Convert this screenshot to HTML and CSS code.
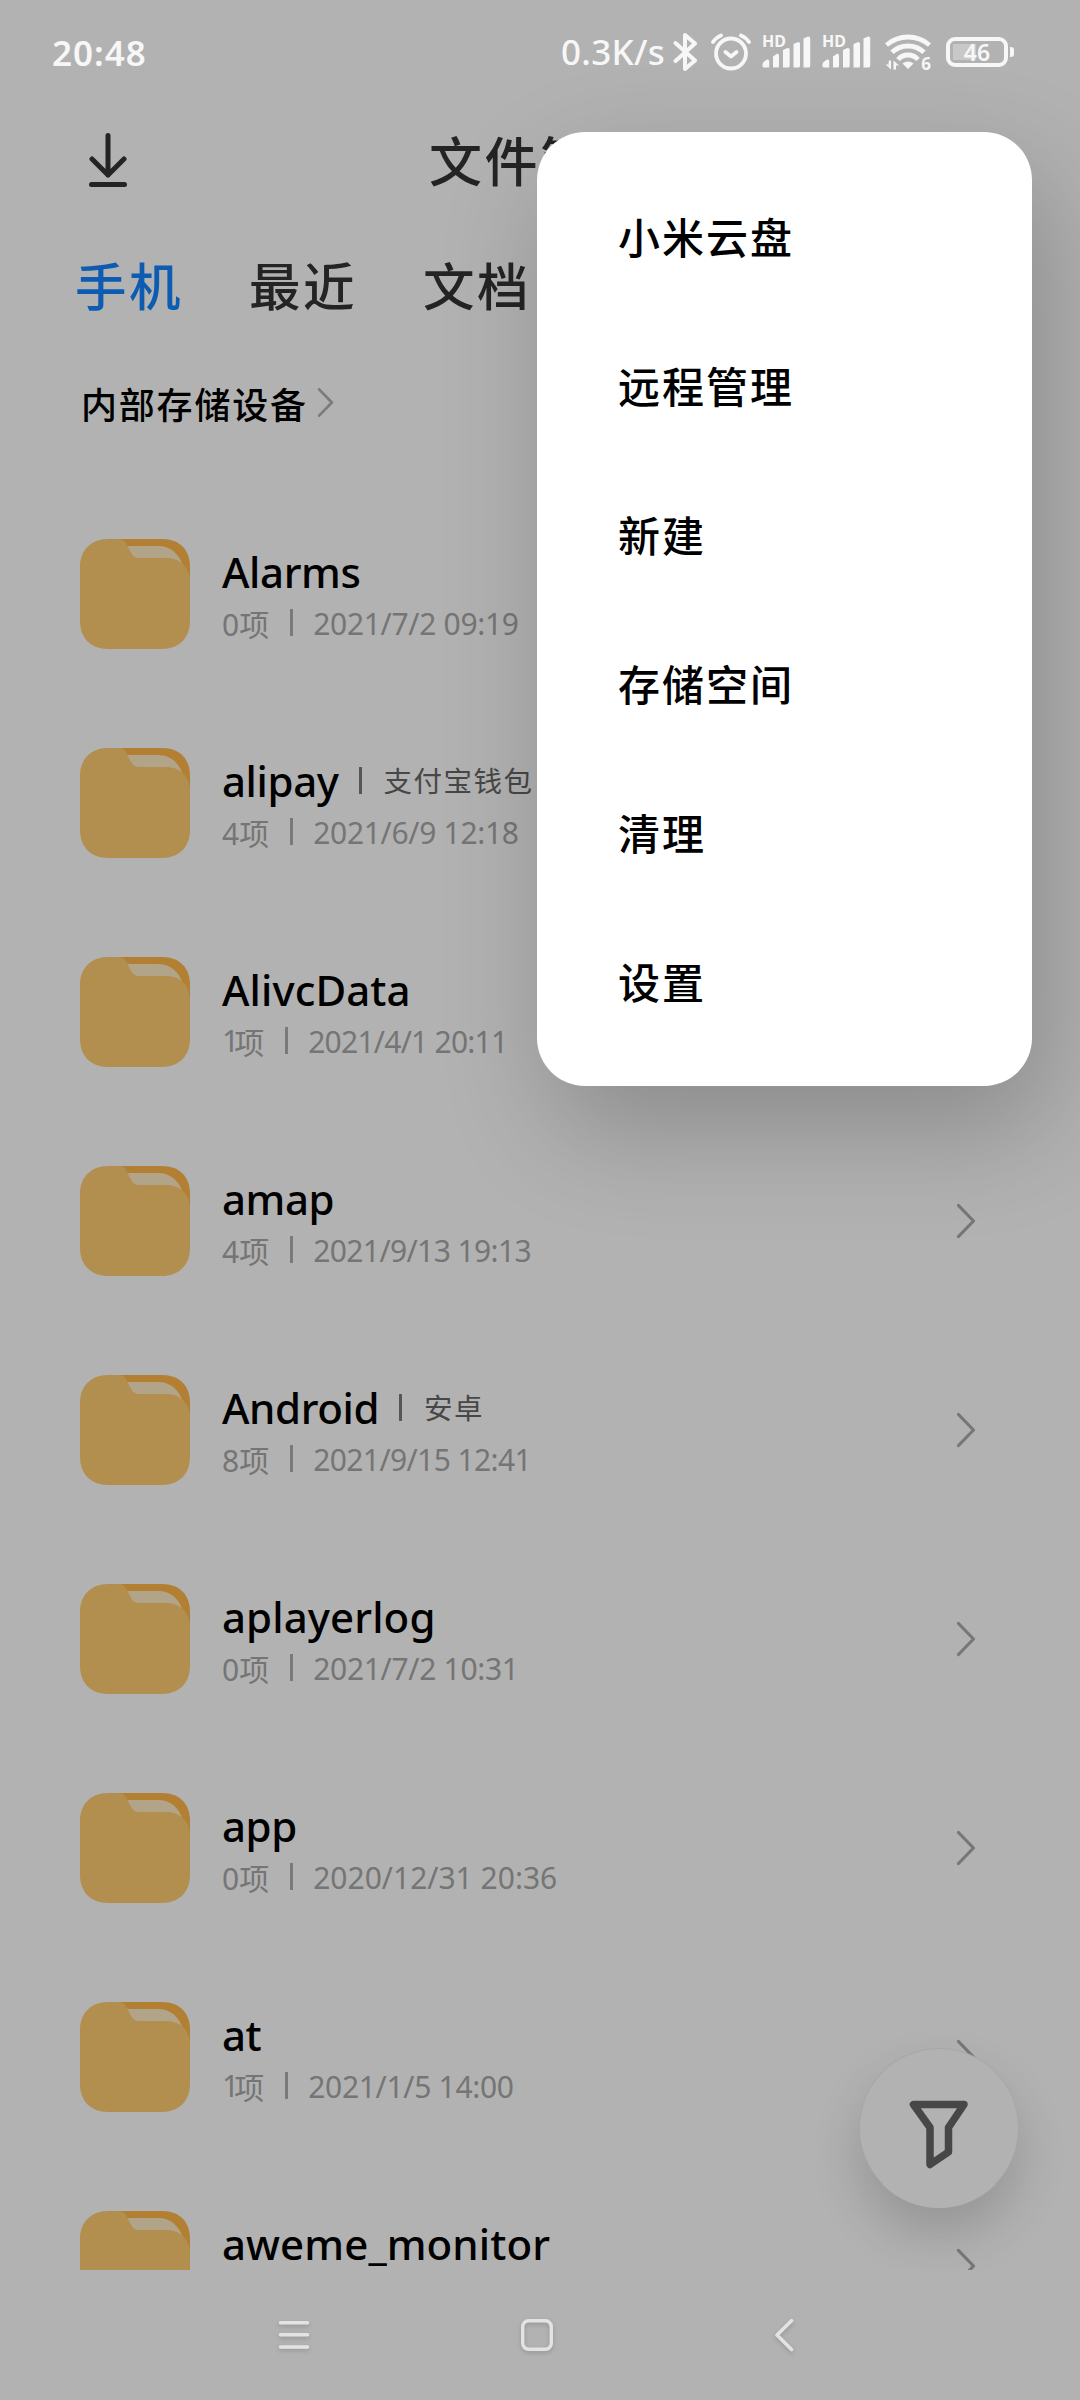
FILE: index.html
```html
<!DOCTYPE html>
<html lang="zh-CN">
<head>
<meta charset="utf-8">
<title>文件管理</title>
<link rel="stylesheet" href="styles.css">
</head>
<body>
<svg class="defs" aria-hidden="true">
  <symbol id="folder" viewBox="0 0 110 110">
    <path fill="#b27f33" d="M28 0H82C100 0 110 11 110 28V60H28Z"/>
    <path fill="#b2a489" d="M44 7H78C91 7 99 15 103 27L90 40H50Z"/>
    <path fill="#b28f4f" d="M28 0H39C43 0 45 2 47 6L50 12C53 17 54 19 60 19H86C101 19 110 29 110 43V82C110 99 99 110 82 110H28C11 110 0 99 0 82V28C0 11 11 0 28 0Z"/>
  </symbol>
  <symbol id="chevron" viewBox="0 0 20 36">
    <path d="M2.5 2.5 17.5 18 2.5 33.5" fill="none" stroke="currentColor" stroke-width="3.2" stroke-linecap="round" stroke-linejoin="round"/>
  </symbol>
  <symbol id="signal" viewBox="0 0 50 32">
    <path fill="currentColor" d="M1.500 26 5 23.500Q7.200 23 7.200 25V31.500H2Q.5 31.500.5 30V28ZM11 31.500V20.500L15 17.800Q17 17.500 17 19.500V30Q17 31.500 15.500 31.500ZM21 31.500V14L25.500 12Q27.700 11.800 27.700 13.500V30Q27.700 31.500 26 31.500ZM31.500 31.500V8L36 6Q38 6 38 7.500V30Q38 31.500 36.500 31.500ZM41.500 31.500V2.500L46 .5Q48.200.5 48.200 2V30Q48.200 31.500 46.500 31.500Z"/>
  </symbol>
</svg>
<div class="screen">
  <header class="status">
    <span class="time">20:48</span>
    <div class="indicators">
      <span class="speed">0.3K/s</span>
      <svg class="bluetooth" viewBox="0 0 25 40"><path d="M2.500 11 22 28.500 12 37V3L22 11.500 2.500 29" fill="none" stroke="currentColor" stroke-width="4" stroke-linecap="round" stroke-linejoin="round"/></svg>
      <svg class="alarm" viewBox="0 0 40 38"><g fill="none" stroke="currentColor" stroke-width="3.800" stroke-linecap="round" stroke-linejoin="round"><circle cx="20" cy="20.500" r="15"/><path d="M14.500 19 20 23.500 25.500 19M2 9Q5 4.500 10 2.500M38 9Q35 4.500 30 2.500"/></g></svg>
      <span class="cell"><span class="hd">HD</span><svg class="bars"><use href="#signal"/></svg></span>
      <span class="cell"><span class="hd">HD</span><svg class="bars"><use href="#signal"/></svg></span>
      <span class="wifi"><svg viewBox="0 0 46 36"><g fill="none" stroke="currentColor" stroke-width="4.800"><path d="M1.500 11Q11 3 23 3T44.500 11M7 18.300Q13.500 12 23 12T39 18.300M13 25.500Q17 21 23 21T33 25.500"/></g><path fill="currentColor" d="M17.500 29.500Q23 25.500 28.500 29.500L23 35ZM6 26.500V35.500L.5 30.500H3V33L4 26.500ZM8.500 35.500V26.500L14 31.500H11V35.500Z"/></svg><span class="gen">6</span></span>
      <span class="battery"><span class="level">46</span></span>
    </div>
  </header>
  <div class="appbar">
    <svg class="download" viewBox="0 0 38 54"><path d="M19 2.500V42M3 26 19 42 35 26M2.500 51.500H35.500" fill="none" stroke="currentColor" stroke-width="5" stroke-linecap="round" stroke-linejoin="round"/></svg>
    <h1 class="title">文件管理</h1>
  </div>
  <nav class="tabs"><span class="tab active">手机</span><span class="tab">最近</span><span class="tab">文档</span></nav>
  <div class="crumb"><span>内部存储设备</span><svg class="crumb-arrow"><use href="#chevron"/></svg></div>
  <main class="list">
    <div class="row"><svg class="folder"><use href="#folder"/></svg><div class="info"><div class="name">Alarms</div><div class="meta">0项<i></i><span class="snug">2021/7/2 09:19</span></div></div><svg class="arrow"><use href="#chevron"/></svg></div>
    <div class="row"><svg class="folder"><use href="#folder"/></svg><div class="info"><div class="name">alipay<span class="alias"><i></i>支付宝钱包</span></div><div class="meta">4项<i></i><span class="snug">2021/6/9 12:18</span></div></div><svg class="arrow"><use href="#chevron"/></svg></div>
    <div class="row"><svg class="folder"><use href="#folder"/></svg><div class="info"><div class="name wide">AlivcData</div><div class="meta narrow"><b>1</b>项<i></i><span class="tightest">2021/4/1 20:11</span></div></div><svg class="arrow"><use href="#chevron"/></svg></div>
    <div class="row"><svg class="folder"><use href="#folder"/></svg><div class="info"><div class="name">amap</div><div class="meta">4项<i></i><span class="tight">2021/9/13 19:13</span></div></div><svg class="arrow"><use href="#chevron"/></svg></div>
    <div class="row"><svg class="folder"><use href="#folder"/></svg><div class="info"><div class="name">Android<span class="alias"><i></i>安卓</span></div><div class="meta">8项<i></i><span class="tight">2021/9/15 12:41</span></div></div><svg class="arrow"><use href="#chevron"/></svg></div>
    <div class="row"><svg class="folder"><use href="#folder"/></svg><div class="info"><div class="name wide">aplayerlog</div><div class="meta">0项<i></i><span class="snug">2021/7/2 10:31</span></div></div><svg class="arrow"><use href="#chevron"/></svg></div>
    <div class="row"><svg class="folder"><use href="#folder"/></svg><div class="info"><div class="name">app</div><div class="meta">0项<i></i><span>2020/12/31 20:36</span></div></div><svg class="arrow"><use href="#chevron"/></svg></div>
    <div class="row"><svg class="folder"><use href="#folder"/></svg><div class="info"><div class="name">at</div><div class="meta narrow"><b>1</b>项<i></i><span class="snug">2021/1/5 14:00</span></div></div><svg class="arrow"><use href="#chevron"/></svg></div>
    <div class="row"><svg class="folder"><use href="#folder"/></svg><div class="info"><div class="name wide">aweme_monitor</div></div><svg class="arrow"><use href="#chevron"/></svg></div>
    <div class="fab"><svg viewBox="0 0 60 69"><path d="M4.500 4.500H55L39.500 27.500V52L21 64.500V27.500Z" fill="none" stroke="currentColor" stroke-width="7.500" stroke-linejoin="round"/></svg></div>
  </main>
  <footer class="navbar">
    <svg viewBox="0 0 36 36"><path d="M4.500 5.700H31.500M4.500 17.700H31.500M4.500 30H31.500" stroke="currentColor" stroke-width="3.600" stroke-linecap="round"/></svg>
    <svg viewBox="0 0 36 36"><rect x="3.700" y="3.700" width="28.600" height="28.600" rx="6" fill="none" stroke="currentColor" stroke-width="3.400"/></svg>
    <svg viewBox="0 0 36 36"><path d="M25.500 3.700 11 18 25.500 32.500" fill="none" stroke="currentColor" stroke-width="3.600" stroke-linecap="round" stroke-linejoin="round"/></svg>
  </footer>
  <div class="menu">
    <div class="item">小米云盘</div>
    <div class="item">远程管理</div>
    <div class="item">新建</div>
    <div class="item">存储空间</div>
    <div class="item">清理</div>
    <div class="item">设置</div>
  </div>
</div>
</body>
</html>
```
FILE: styles.css
```css
* { box-sizing: border-box; }
body { margin: 0; background: #b2b2b2; }
svg { display: block; flex: none; }
.defs { position: absolute; width: 0; height: 0; }
.screen {
  position: relative;
  display: flex;
  flex-direction: column;
  width: 1080px;
  height: 2400px;
  overflow: hidden;
  background: #b2b2b2;
  color: #000;
  font-family: "Noto Sans", "Noto Sans CJK SC", sans-serif;
  font-weight: 500;
  white-space: nowrap;
}

/* Status bar */
.status { display: flex; justify-content: space-between; height: 104px; padding: 0 66px 0 52px; color: #f7f7f7; }
.time { font-size: 35px; line-height: 106px; font-weight: 600; letter-spacing: 1px; }
.indicators { display: flex; align-items: center; height: 104px; }
.speed { width: 112px; font-size: 35px; line-height: 106px; letter-spacing: .3px; }
.bluetooth { width: 25px; height: 40px; margin-right: 13px; }
.alarm { width: 40px; height: 38px; margin-right: 11px; }
.cell { position: relative; width: 50px; height: 32px; margin-right: 10px; }
.bars { width: 50px; height: 32px; }
.hd { position: absolute; left: 0; top: -5px; font-size: 16px; line-height: 20px; font-weight: 700; }
.wifi { position: relative; margin: 0 15px 0 3px; }
.wifi svg { width: 46px; height: 36px; }
.gen { position: absolute; right: 0; bottom: -4px; font-size: 17px; line-height: 20px; font-weight: 700; }
.battery { position: relative; width: 62px; height: 30px; margin-right: 6px; border: 4px solid; border-radius: 9px; background: linear-gradient(90deg, #c8c8c8, #c8c8c8) 3px 3px / 23px 16px no-repeat; }
.battery::after { content: ""; position: absolute; left: 60px; top: 6px; width: 4px; height: 10px; border-radius: 0 3px 3px 0; background: currentColor; }
.level { display: block; text-align: center; font-size: 23px; line-height: 22px; font-weight: 600; }

/* App bar */
.appbar { display: flex; align-items: center; height: 114px; padding-left: 89px; color: #242424; }
.download { width: 38px; height: 54px; margin-bottom: 2px; }
.title { margin: 2px 0 0 302px; font-size: 53px; letter-spacing: 2.500px; font-weight: 500; line-height: 78px; }
.tabs { display: flex; align-items: center; gap: 66px; height: 138px; padding: 0 0 8px 75px; color: #242424; font-size: 51.500px; letter-spacing: 2.500px; }
.active { color: #0d5cb2; }
.crumb { display: flex; align-items: center; height: 98px; padding: 0 0 4px 81px; font-size: 36px; letter-spacing: 1.800px; }
.crumb-arrow { width: 17px; height: 31px; margin: 0 0 1px 9px; color: #7c7c7c; }

/* File list */
.list { position: relative; height: 1781px; margin-top: 35px; overflow: hidden; }
.row { display: flex; align-items: center; height: 209px; padding: 0 104px 0 80px; }
.folder { width: 110px; height: 110px; }
.info { flex: 1; height: 110px; margin-left: 32px; }
.name { display: flex; align-items: center; height: 66px; font-size: 42px; line-height: 50px; letter-spacing: -.4px; }
.wide { letter-spacing: .1px; }
.alias { display: flex; align-items: center; font-size: 28.500px; letter-spacing: 1.500px; font-weight: 400; color: #474747; }
.alias i { width: 3px; height: 27px; margin: 0 22px 0 20px; background: #565656; }
.meta { display: flex; align-items: center; height: 36px; font-size: 30px; font-weight: 400; color: #757575; }
.meta span { margin: 2px 0 0 -1px; }
.meta i { width: 3px; height: 27px; margin: 0 21px; background: #7a7a7a; }
.narrow b { margin-right: -5px; font-weight: 400; }
.snug { letter-spacing: -.3px; }
.tight { letter-spacing: -.6px; }
.tightest { letter-spacing: -.75px; }
.arrow { width: 20px; height: 36px; color: #777; }
.fab { position: absolute; left: 859px; top: 1559px; display: flex; align-items: center; justify-content: center; width: 160px; height: 160px; border: 1px solid #a7a7a7; border-bottom-color: transparent; border-radius: 50%; background: #b2b2b2; background-clip: border-box; color: #474747; box-shadow: 0 26px 50px rgba(0,0,0,.16); }
.fab svg { width: 60px; height: 69px; margin-top: 12px; }

/* System navigation */
.navbar { display: flex; justify-content: space-between; padding: 47px 278px 0 276px; color: #e3e3e3; }
.navbar svg { width: 36px; height: 36px; filter: drop-shadow(0 2px 2px rgba(0,0,0,.16)); }
.navbar svg:nth-child(2) { margin-right: 5px; }

/* Popup menu */
.menu { position: absolute; left: 537px; top: 132px; width: 495px; height: 954px; padding: 31px 0 0 81px; border-radius: 48px; background: #fff; box-shadow: 15px 43px 110px rgba(0,0,0,.22); font-size: 42px; letter-spacing: 2px; }
.item { height: 149px; line-height: 149px; }
```
